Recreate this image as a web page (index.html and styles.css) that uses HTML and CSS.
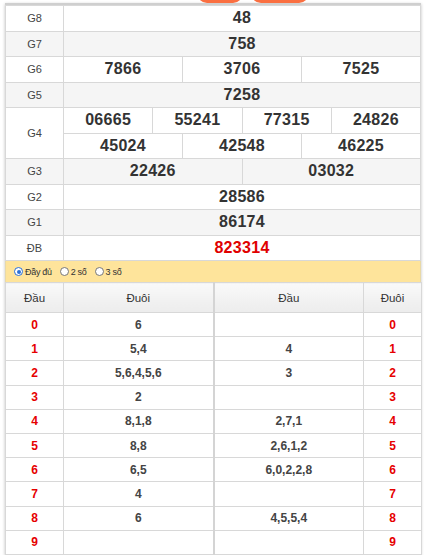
FILE: index.html
```html
<!DOCTYPE html>
<html lang="vi">
<head>
<meta charset="utf-8">
<link rel="stylesheet" href="styles.css">
</head>
<body>
<div class="page">
  <div class="tabs"><span class="tab tab-a"></span><span class="tab tab-b"></span></div>
  <div class="box">
    <table class="kq">
      <colgroup>
        <col class="c-label">
        <col span="12">
      </colgroup>
      <tr><td class="lbl">G8</td><td colspan="12" class="num">48</td></tr>
      <tr class="alt"><td class="lbl">G7</td><td colspan="12" class="num">758</td></tr>
      <tr><td class="lbl">G6</td><td colspan="4" class="num">7866</td><td colspan="4" class="num">3706</td><td colspan="4" class="num">7525</td></tr>
      <tr class="alt"><td class="lbl">G5</td><td colspan="12" class="num">7258</td></tr>
      <tr><td class="lbl" rowspan="2">G4</td><td colspan="3" class="num">06665</td><td colspan="3" class="num">55241</td><td colspan="3" class="num">77315</td><td colspan="3" class="num">24826</td></tr>
      <tr><td colspan="4" class="num">45024</td><td colspan="4" class="num">42548</td><td colspan="4" class="num">46225</td></tr>
      <tr class="alt"><td class="lbl">G3</td><td colspan="6" class="num">22426</td><td colspan="6" class="num">03032</td></tr>
      <tr><td class="lbl">G2</td><td colspan="12" class="num">28586</td></tr>
      <tr class="alt"><td class="lbl">G1</td><td colspan="12" class="num">86174</td></tr>
      <tr><td class="lbl">ĐB</td><td colspan="12" class="num db">823314</td></tr>
    </table>
    <div class="opts">
      <label class="opt"><span class="radio on"></span>Đầy đủ</label>
      <label class="opt"><span class="radio"></span>2 số</label>
      <label class="opt"><span class="radio"></span>3 số</label>
    </div>
    <table class="lt">
      <colgroup>
        <col class="c-d"><col class="c-m1"><col class="c-m2"><col class="c-d">
      </colgroup>
      <tr class="hd"><th>Đầu</th><th class="mid">Đuôi</th><th>Đầu</th><th>Đuôi</th></tr>
      <tr><td class="r">0</td><td class="mid">6</td><td></td><td class="r">0</td></tr>
      <tr><td class="r">1</td><td class="mid">5,4</td><td>4</td><td class="r">1</td></tr>
      <tr><td class="r">2</td><td class="mid">5,6,4,5,6</td><td>3</td><td class="r">2</td></tr>
      <tr><td class="r">3</td><td class="mid">2</td><td></td><td class="r">3</td></tr>
      <tr><td class="r">4</td><td class="mid">8,1,8</td><td>2,7,1</td><td class="r">4</td></tr>
      <tr><td class="r">5</td><td class="mid">8,8</td><td>2,6,1,2</td><td class="r">5</td></tr>
      <tr><td class="r">6</td><td class="mid">6,5</td><td>6,0,2,2,8</td><td class="r">6</td></tr>
      <tr><td class="r">7</td><td class="mid">4</td><td></td><td class="r">7</td></tr>
      <tr><td class="r">8</td><td class="mid">6</td><td>4,5,5,4</td><td class="r">8</td></tr>
      <tr><td class="r">9</td><td class="mid"></td><td></td><td class="r">9</td></tr>
    </table>
  </div>
</div>
</body>
</html>
```

FILE: styles.css
```css
html, body {
  margin: 0;
  padding: 0;
  background: #fff;
  font-family: "Liberation Sans", Arial, sans-serif;
  color: #333;
}
.page {
  padding: 0 5px;
}
.tabs {
  height: 3px;
  overflow: hidden;
  display: flex;
  gap: 8px;
  padding-left: 192px;
}
.tab {
  display: block;
  height: 20px;
  margin-top: -17px;
  background: #fa6f41;
  border-radius: 10px;
}
.tab-a { width: 46px; }
.tab-b { width: 58px; }
.box {
  width: 416px;
  border-top: 2px solid #cfcfcf;
  box-shadow: 0 1px 3px rgba(0,0,0,0.25);
  background: #fff;
}
table {
  border-collapse: collapse;
  width: 100%;
  table-layout: fixed;
}
.kq td {
  border: 1px solid #d8d8d8;
  height: 24.5px;
  padding: 0;
  text-align: center;
  vertical-align: middle;
}
.c-label { width: 58px; }
.kq .lbl {
  font-size: 11px;
  color: #444;
}
.kq .num {
  font-size: 16px;
  font-weight: bold;
  color: #333;
  letter-spacing: 0.3px;
}
.kq .db { color: #e00000; }
.kq tr.alt td { background: #f5f5f5; }
.opts {
  height: 21px;
  background: #fee49b;
  display: flex;
  align-items: center;
  padding-left: 8px;
  gap: 8px;
  border-left: 1px solid #e8d9a8;
  border-right: 1px solid #e8d9a8;
}
.opt {
  display: flex;
  align-items: center;
  gap: 2px;
  font-size: 9px;
  letter-spacing: -0.3px;
  color: #333;
}
.radio {
  width: 7px;
  height: 7px;
  border-radius: 50%;
  border: 1px solid #777;
  background: #fff;
  box-sizing: content-box;
  position: relative;
}
.radio.on {
  border-color: #2a6fd6;
}
.radio.on::after {
  content: "";
  position: absolute;
  left: 1.5px;
  top: 1.5px;
  width: 4px;
  height: 4px;
  border-radius: 50%;
  background: #2a6fd6;
}
.c-d { width: 58px; }
.c-m1 { width: 150px; }
.c-m2 { width: 150px; }
.lt th, .lt td {
  border: 1px solid #d8d8d8;
  padding: 0;
  text-align: center;
  vertical-align: middle;
}
.lt th {
  height: 29px;
  font-size: 11.5px;
  font-weight: normal;
  color: #333;
  background: linear-gradient(#f9f9f9, #ececec);
}
.lt td {
  height: 23.2px;
  font-size: 12px;
  font-weight: bold;
  color: #444;
}
.lt .mid {
  border-right: 2px solid #d4d4d4;
}
.lt td.r {
  color: #e60000;
}
```
